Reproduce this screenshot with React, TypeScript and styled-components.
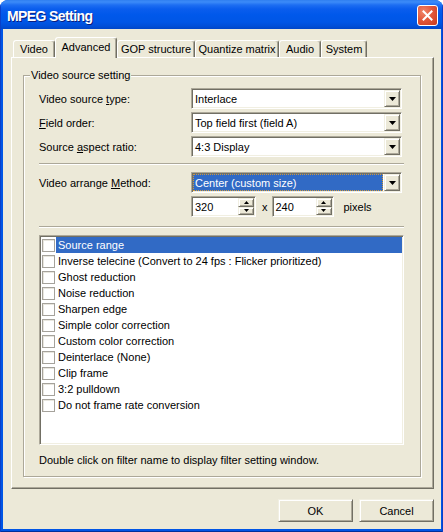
import React from 'react';
import styled, { createGlobalStyle, css } from 'styled-components';

const Global = createGlobalStyle`
  html, body { margin: 0; padding: 0; background: #ffffff; }
  body { font-family: "Liberation Sans", Arial, sans-serif; font-size: 11px; color: #000; }
  * { box-sizing: border-box; }
`;

const raised = css`
  border: 1px solid;
  border-color: #f1efe2 #716f64 #716f64 #f1efe2;
  box-shadow: inset 1px 1px #ffffff, inset -1px -1px #aca899;
  background: #ece9d8;
`;

const sunken = css`
  border: 1px solid;
  border-color: #aca899 #ffffff #ffffff #aca899;
  box-shadow: inset 1px 1px #716f64, inset -1px -1px #f1efe2;
  padding: 1px;
  background: #ffffff;
`;

const Window = styled.div`
  width: 443px;
  height: 532px;
  display: flex;
  flex-direction: column;
  border-radius: 8px 8px 0 0;
  overflow: hidden;
  background: #0055e5;
`;

const TitleBar = styled.div`
  height: 29px;
  flex: none;
  display: flex;
  align-items: center;
  justify-content: space-between;
  padding: 0 5px 0 7px;
  background: linear-gradient(
    to bottom,
    #2f7ff0 0px,
    #3c8bf8 2px,
    #1d6ef2 5px,
    #0a5ded 9px,
    #0058ea 15px,
    #0056e6 22px,
    #004fd8 26px,
    #0046c8 29px
  );
  box-shadow: inset 1px 0 #0a3fc8, inset -1px 0 #0a3fc8;
`;

const Title = styled.div`
  color: #ffffff;
  font-family: "Liberation Sans", Arial, sans-serif;
  font-weight: bold;
  font-size: 14px;
  letter-spacing: -0.6px;
  text-shadow: 1px 1px #0a1e7e;
  padding-top: 2px;
`;

const CloseButton = styled.div`
  width: 21px;
  height: 21px;
  border: 1px solid #ffffff;
  border-radius: 3px;
  background: radial-gradient(circle at 30% 30%, #f0866a 0%, #e2583b 45%, #c8391d 100%);
  display: flex;
  align-items: center;
  justify-content: center;
  margin-top: 1px;
`;

const Frame = styled.div`
  flex: 1;
  display: flex;
  padding: 0 4px 3px 3px;
  background: #0055e5;
  box-shadow: inset 1px 0 #0a3fc8, inset -1px 0 #0a3fc8, inset 0 -1px #00309a;
`;

const Body = styled.div`
  flex: 1;
  display: flex;
  flex-direction: column;
  background: #ece9d8;
  padding: 8px 7px 0 8px;
`;

const TabStrip = styled.div`
  height: 21px;
  display: flex;
  align-items: flex-end;
  padding-left: 2px;
  margin-bottom: -1px;
  position: relative;
  z-index: 1;
`;

const Tab = styled.div<{ $active?: boolean; $w: number }>`
  width: ${(p) => p.$w}px;
  height: ${(p) => (p.$active ? 21 : 17)}px;
  margin-bottom: ${(p) => (p.$active ? 0 : 1)}px;
  background: #ece9d8;
  border: 1px solid;
  border-bottom: none;
  border-color: #ffffff #716f64 transparent #ffffff;
  border-radius: 3px 3px 0 0;
  box-shadow: inset -1px 0 #aca899;
  display: flex;
  align-items: center;
  justify-content: center;
  padding-bottom: ${(p) => (p.$active ? 3 : 0)}px;
  white-space: nowrap;
  position: relative;
  z-index: ${(p) => (p.$active ? 2 : 1)};
`;

const Panel = styled.div`
  height: 432px;
  border: 1px solid;
  border-color: #ffffff #716f64 #716f64 #ffffff;
  box-shadow: inset -1px -1px #aca899;
  padding: 11px 12px 0 11px;
`;

const Group = styled.fieldset`
  margin: 0;
  padding: 0;
  width: 396px;
  border: 1px solid #aca899;
  box-shadow: 1px 1px 0 #ffffff, inset 1px 1px 0 #ffffff;
`;

const Legend = styled.legend`
  margin-left: 6px;
  padding: 0 1px;
  line-height: 13px;
  background: #ece9d8;
  position: relative;
`;

const GroupContent = styled.div`
  padding: 6px 16px 9px 15px;
  display: flex;
  flex-direction: column;
`;

const Rows = styled.div`
  display: flex;
  flex-direction: column;
  gap: 3px;
`;

const Row = styled.div<{ $mt?: number }>`
  display: grid;
  grid-template-columns: 152px 211px;
  align-items: center;
  margin-top: ${(p) => p.$mt ?? 0}px;
`;

const Label = styled.div`
  white-space: nowrap;
`;

const U = styled.span`
  text-decoration: underline;
`;

const Combo = styled.div`
  ${sunken};
  height: 21px;
  display: flex;
  align-items: stretch;
`;

const ComboText = styled.div<{ $selected?: boolean }>`
  flex: 1;
  display: flex;
  align-items: center;
  margin-right: 1px;
  padding-left: 2px;
  white-space: nowrap;
  ${(p) =>
    p.$selected &&
    css`
      background: #316ac5;
      color: #ffffff;
      outline: 1px dotted #d29a3a;
      outline-offset: -1px;
      padding-left: 2px;
    `}
`;

const DropButton = styled.div`
  ${raised};
  width: 16px;
  flex: none;
  display: flex;
  align-items: center;
  justify-content: center;
`;

const Separator = styled.div<{ $mt: number }>`
  height: 2px;
  margin-top: ${(p) => p.$mt}px;
  border-top: 1px solid #aca899;
  border-bottom: 1px solid #ffffff;
  width: 365px;
`;

const SpinRow = styled.div`
  display: flex;
  align-items: center;
`;

const Spin = styled.div<{ $w: number }>`
  ${sunken};
  width: ${(p) => p.$w}px;
  height: 21px;
  display: flex;
  align-items: stretch;
`;

const SpinText = styled.div`
  flex: 1;
  display: flex;
  align-items: center;
  padding-left: 2px;
`;

const SpinButtons = styled.div`
  width: 16px;
  display: flex;
  flex-direction: column;
`;

const SpinBtn = styled.div`
  ${raised};
  flex: 1;
  display: flex;
  align-items: center;
  justify-content: center;
`;

const Times = styled.div`
  margin: 0 4px 0 6px;
`;

const Pixels = styled.div`
  margin-left: 10px;
`;

const List = styled.div`
  ${sunken};
  margin-top: 7px;
  width: 365px;
  height: 210px;
  display: flex;
  flex-direction: column;
`;

const Item = styled.div`
  height: 16px;
  display: flex;
  align-items: center;
  padding-left: 1px;
  flex: none;
`;

const Check = styled.div`
  width: 13px;
  height: 13px;
  border: 1px solid #a5a29b;
  background: #ffffff;
  box-shadow: inset 1px 1px #e8e6de;
  flex: none;
`;

const ItemText = styled.div<{ $selected?: boolean }>`
  flex: 1;
  height: 16px;
  margin-left: 1px;
  padding-left: 2px;
  display: flex;
  align-items: center;
  white-space: nowrap;
  ${(p) =>
    p.$selected &&
    css`
      background: #316ac5;
      color: #ffffff;
    `}
`;

const Status = styled.div`
  margin-top: 9px;
  line-height: 13px;
`;

const ButtonRow = styled.div`
  display: flex;
  justify-content: flex-end;
  gap: 6px;
  margin-top: 10px;
`;

const Button = styled.div`
  ${raised};
  width: 75px;
  height: 23px;
  display: flex;
  align-items: center;
  justify-content: center;
`;

const DownArrow = () => (
  <svg width="7" height="4" viewBox="0 0 7 4">
    <polygon points="0,0 7,0 3.5,4" fill="#000" />
  </svg>
);

const SmallArrow = ({ up }: { up?: boolean }) => (
  <svg width="5" height="3" viewBox="0 0 5 3">
    <polygon points={up ? '0,3 5,3 2.5,0' : '0,0 5,0 2.5,3'} fill="#000" />
  </svg>
);

const CloseIcon = () => (
  <svg width="11" height="11" viewBox="0 0 11 11">
    <path d="M1.5 1.5 L9.5 9.5 M9.5 1.5 L1.5 9.5" stroke="#fff" strokeWidth="2" strokeLinecap="square" />
  </svg>
);

const tabs = [
  { label: 'Video', w: 42 },
  { label: 'Advanced', w: 62, active: true },
  { label: 'GOP structure', w: 78 },
  { label: 'Quantize matrix', w: 84 },
  { label: 'Audio', w: 42 },
  { label: 'System', w: 46 },
];

const filters = [
  'Source range',
  'Inverse telecine (Convert to 24 fps : Flicker prioritized)',
  'Ghost reduction',
  'Noise reduction',
  'Sharpen edge',
  'Simple color correction',
  'Custom color correction',
  'Deinterlace (None)',
  'Clip frame',
  '3:2 pulldown',
  'Do not frame rate conversion',
];

const ComboBox = ({ value, selected }: { value: string; selected?: boolean }) => (
  <Combo>
    <ComboText $selected={selected}>{value}</ComboText>
    <DropButton>
      <DownArrow />
    </DropButton>
  </Combo>
);

const SpinBox = ({ value, w }: { value: string; w: number }) => (
  <Spin $w={w}>
    <SpinText>{value}</SpinText>
    <SpinButtons>
      <SpinBtn>
        <SmallArrow up />
      </SpinBtn>
      <SpinBtn>
        <SmallArrow />
      </SpinBtn>
    </SpinButtons>
  </Spin>
);

export default function App() {
  return (
    <>
      <Global />
      <Window>
        <TitleBar>
          <Title>MPEG Setting</Title>
          <CloseButton>
            <CloseIcon />
          </CloseButton>
        </TitleBar>
        <Frame>
          <Body>
            <TabStrip>
              {tabs.map((t) => (
                <Tab key={t.label} $w={t.w} $active={t.active}>
                  {t.label}
                </Tab>
              ))}
            </TabStrip>
            <Panel>
              <Group>
                <Legend>Video source setting</Legend>
                <GroupContent>
                  <Rows>
                    <Row>
                      <Label>
                        Video source <U>t</U>ype:
                      </Label>
                      <ComboBox value="Interlace" />
                    </Row>
                    <Row>
                      <Label>
                        <U>F</U>ield order:
                      </Label>
                      <ComboBox value="Top field first (field A)" />
                    </Row>
                    <Row>
                      <Label>
                        Source <U>a</U>spect ratio:
                      </Label>
                      <ComboBox value="4:3 Display" />
                    </Row>
                  </Rows>
                  <Separator $mt={6} />
                  <Row $mt={7}>
                    <Label>
                      Video arrange <U>M</U>ethod:
                    </Label>
                    <ComboBox value="Center (custom size)" selected />
                  </Row>
                  <Row $mt={3}>
                    <div />
                    <SpinRow>
                      <SpinBox value="320" w={65} />
                      <Times>x</Times>
                      <SpinBox value="240" w={62} />
                      <Pixels>pixels</Pixels>
                    </SpinRow>
                  </Row>
                  <Separator $mt={9} />
                  <List>
                    {filters.map((f, i) => (
                      <Item key={f}>
                        <Check />
                        <ItemText $selected={i === 0}>{f}</ItemText>
                      </Item>
                    ))}
                  </List>
                  <Status>Double click on filter name to display filter setting window.</Status>
                </GroupContent>
              </Group>
            </Panel>
            <ButtonRow>
              <Button>OK</Button>
              <Button>Cancel</Button>
            </ButtonRow>
          </Body>
        </Frame>
      </Window>
    </>
  );
}
